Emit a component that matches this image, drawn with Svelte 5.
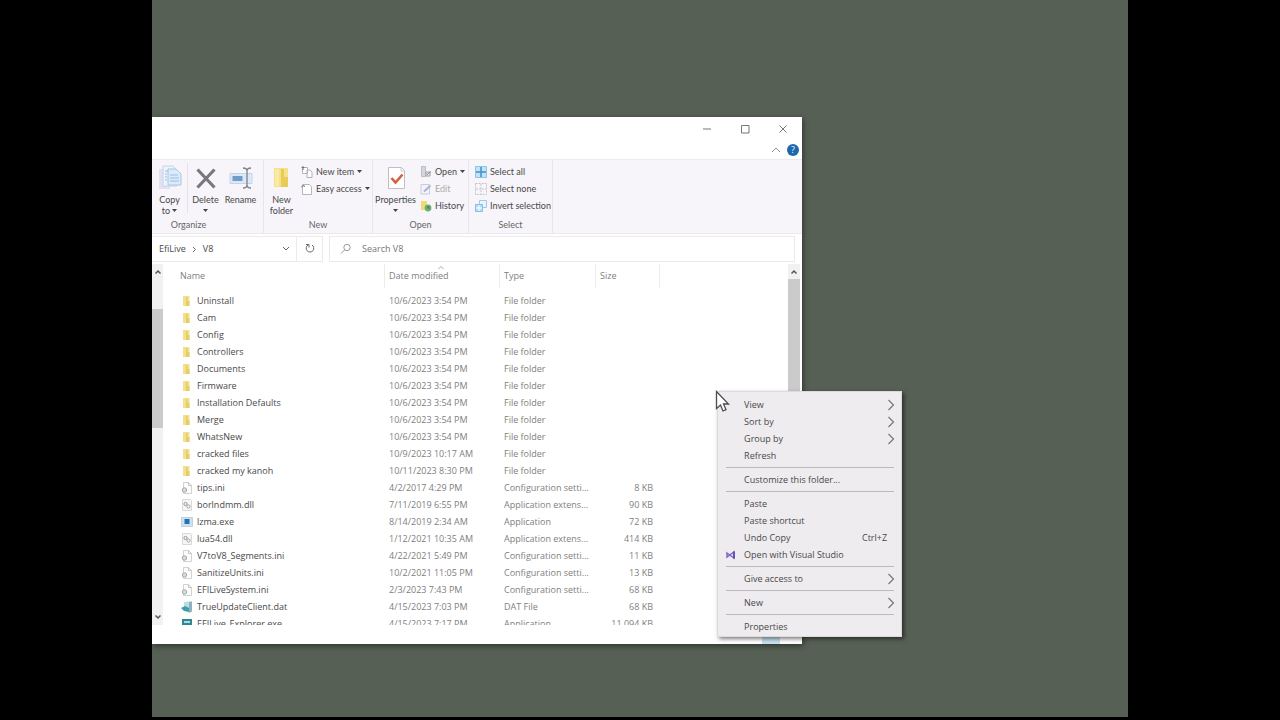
<script lang="ts">
	interface FileEntry {
		name: string;
		date: string;
		type: string;
		size?: string;
		icon: 'folder' | 'ini' | 'dll' | 'exe' | 'dat' | 'app';
	}

	interface MenuItem {
		label: string;
		shortcut?: string;
		submenu?: boolean;
		icon?: boolean;
	}

	const folderDates: [string, string][] = [
		['Uninstall', '10/6/2023 3:54 PM'],
		['Cam', '10/6/2023 3:54 PM'],
		['Config', '10/6/2023 3:54 PM'],
		['Controllers', '10/6/2023 3:54 PM'],
		['Documents', '10/6/2023 3:54 PM'],
		['Firmware', '10/6/2023 3:54 PM'],
		['Installation Defaults', '10/6/2023 3:54 PM'],
		['Merge', '10/6/2023 3:54 PM'],
		['WhatsNew', '10/6/2023 3:54 PM'],
		['cracked files', '10/9/2023 10:17 AM'],
		['cracked my kanoh', '10/11/2023 8:30 PM']
	];

	const files: FileEntry[] = [
		...folderDates.map(([name, date]) => ({ name, date, type: 'File folder', icon: 'folder' as const })),
		{ name: 'tips.ini', date: '4/2/2017 4:29 PM', type: 'Configuration setti...', size: '8 KB', icon: 'ini' },
		{ name: 'borlndmm.dll', date: '7/11/2019 6:55 PM', type: 'Application extens...', size: '90 KB', icon: 'dll' },
		{ name: 'lzma.exe', date: '8/14/2019 2:34 AM', type: 'Application', size: '72 KB', icon: 'exe' },
		{ name: 'lua54.dll', date: '1/12/2021 10:35 AM', type: 'Application extens...', size: '414 KB', icon: 'dll' },
		{ name: 'V7toV8_Segments.ini', date: '4/22/2021 5:49 PM', type: 'Configuration setti...', size: '11 KB', icon: 'ini' },
		{ name: 'SanitizeUnits.ini', date: '10/2/2021 11:05 PM', type: 'Configuration setti...', size: '13 KB', icon: 'ini' },
		{ name: 'EFILiveSystem.ini', date: '2/3/2023 7:43 PM', type: 'Configuration setti...', size: '68 KB', icon: 'ini' },
		{ name: 'TrueUpdateClient.dat', date: '4/15/2023 7:03 PM', type: 'DAT File', size: '68 KB', icon: 'dat' },
		{ name: 'EFILive_Explorer.exe', date: '4/15/2023 7:17 PM', type: 'Application', size: '11,094 KB', icon: 'app' }
	];

	const menu: MenuItem[][] = [
		[
			{ label: 'View', submenu: true },
			{ label: 'Sort by', submenu: true },
			{ label: 'Group by', submenu: true },
			{ label: 'Refresh' }
		],
		[{ label: 'Customize this folder...' }],
		[
			{ label: 'Paste' },
			{ label: 'Paste shortcut' },
			{ label: 'Undo Copy', shortcut: 'Ctrl+Z' },
			{ label: 'Open with Visual Studio', icon: true }
		],
		[{ label: 'Give access to', submenu: true }],
		[{ label: 'New', submenu: true }],
		[{ label: 'Properties' }]
	];

	let search = $state('');
</script>

{#snippet caret()}
	<svg class="caret" width="5" height="3" viewBox="0 0 5 3"><path d="M0 0h5L2.5 3z" fill="#444" /></svg>
{/snippet}

{#snippet fileIcon(kind: string)}
	<svg class="file-icon" width="12" height="12" viewBox="0 0 12 12">
		{#if kind === 'folder'}
			<path d="M2 1h6.500v10H2z" fill="#f3e08c" />
			<path d="M5 2h1.500v4h2v5H5z" fill="#e6cd6c" />
		{:else if kind === 'ini'}
			<path d="M2.500 .5h5l3 3v8h-8z" fill="#fcfcfc" stroke="#c4c6c9" stroke-width=".8" />
			<path d="M7.500 .5v3h3" fill="none" stroke="#b5b8bb" stroke-width=".8" />
			<circle cx="3.500" cy="8" r="2.200" fill="#dadcde" stroke="#a4a7aa" stroke-width="1" />
		{:else if kind === 'dll'}
			<path d="M1.500 .5h8l1 1v10h-9z" fill="#f6f6f6" stroke="#cfd0d2" stroke-width=".8" />
			<circle cx="4.500" cy="5" r="1.600" fill="none" stroke="#909498" />
			<circle cx="7.500" cy="7.500" r="1.600" fill="none" stroke="#a0a4a8" />
		{:else if kind === 'exe'}
			<path d="M.5 1.500h11v9H.5z" fill="#cfe0ee" stroke="#b5c8d8" stroke-width=".8" />
			<path d="M3.500 3h5v5h-5z" fill="#2372b0" />
		{:else if kind === 'dat'}
			<path d="M4 1l7-.5v10L8 12z" fill="#8db3ba" />
			<path d="M3 1h5v9H3z" fill="#b9dde2" />
			<path d="M0 7l4-2 4 2v4L3 10z" fill="#3c9fae" />
		{:else}
			<path d="M1 1h10v10H1z" fill="#2e8796" />
			<path d="M3 3h6v2H3z" fill="#a7dbe0" />
		{/if}
	</svg>
{/snippet}

<div class="screen">
	<main class="window">
		<header class="title-bar">
			<div class="window-buttons">
				<button aria-label="Minimize"><svg width="10" height="10" viewBox="0 0 10 10"><path d="M1 5h8" /></svg></button>
				<button aria-label="Maximize"><svg width="10" height="10" viewBox="0 0 10 10"><path d="M1.500 1.500h7.500v7.500H1.500z" /></svg></button>
				<button aria-label="Close"><svg width="10" height="10" viewBox="0 0 10 10"><path d="M1.500 1.500l7 7M8.500 1.500l-7 7" /></svg></button>
			</div>
			<div class="ribbon-toggles">
				<button aria-label="Collapse ribbon"><svg width="10" height="8" viewBox="0 0 10 8"><path d="M1 6l4-4 4 4" stroke-width=".8" /></svg></button>
				<button class="help" aria-label="Help">?</button>
			</div>
		</header>

		<div class="ribbon">
			<section class="group organize">
				<div class="tools">
					<button class="big">
						<svg width="24" height="26" viewBox="0 0 24 26">
							<path d="M1 4h11v20H1z" fill="#e3e1f0" />
							<path d="M5 1h10l4 4v16H5z" fill="#eef4fc" stroke="#c4d4e8" />
							<path d="M10 4h8l5 5v11H10z" fill="#dceafa" stroke="#a9c6e6" />
							<path d="M12 10h8M12 13h9M12 16h9M7 6h3M7 9h2M7 12h2M7 15h2" stroke="#9abce2" fill="none" />
						</svg>
						<span>Copy<br />to {@render caret()}</span>
					</button>
					<i class="divider"></i>
					<button class="big">
						<svg width="24" height="26" viewBox="0 0 24 26"><path d="M3.500 4.500l17 18M20.500 4.500l-17 18" stroke="#77787d" stroke-width="3.200" fill="none" /></svg>
						<span>Delete<br />{@render caret()}</span>
					</button>
					<button class="big">
						<svg width="24" height="26" viewBox="0 0 24 26">
							<path d="M1 8.500h22v10H1z" fill="#dce8f5" stroke="#c5d5e6" />
							<path d="M3.500 11h10v5h-10z" fill="#6f9cc9" />
							<path d="M14 3q4 0 4 3v14q0 3-4 3M22 3q-4 0-4 3v14q0 3 4 3" fill="none" stroke="#7b8087" stroke-width="1.300" />
						</svg>
						<span>Rename</span>
					</button>
				</div>
				<h2>Organize</h2>
			</section>

			<section class="group new">
				<div class="tools">
					<button class="big">
						<svg width="24" height="26" viewBox="0 0 24 26">
							<path d="M4 3h14v19H4z" fill="#f5e18a" />
							<path d="M11 4h3v8h4v10h-7z" fill="#e9cb58" />
							<path d="M5 4h4v17H5z" fill="#f9eba6" />
						</svg>
						<span>New<br />folder</span>
					</button>
					<div class="stack">
						<button>
							<svg width="12" height="12" viewBox="0 0 12 12"><path d="M1.500 1.500h5v6h-5zM6 4h3l2 2v5.500H6z" fill="#fff" stroke="#b0b3b8" /><path d="M.5 1.500h3M2 0v4" stroke="#777" /></svg>
							New item {@render caret()}
						</button>
						<button>
							<svg width="12" height="12" viewBox="0 0 12 12"><path d="M1.500 1.500h7l2 2v8h-9z" fill="#fff" stroke="#b5b7bb" /><path d="M0 4.500l2-2 2 1" fill="none" stroke="#666" /></svg>
							Easy access {@render caret()}
						</button>
					</div>
				</div>
				<h2>New</h2>
			</section>

			<section class="group open">
				<div class="tools">
					<button class="big">
						<svg width="24" height="26" viewBox="0 0 24 26">
							<path d="M4.500 2.500h13l3 3v18h-16z" fill="#fff" stroke="#bfc0c6" />
							<path d="M17 3v3h3" fill="none" stroke="#c9c9cf" />
							<path d="M7.500 13l4 4.500 7-8" fill="none" stroke="#d4603c" stroke-width="2.600" />
						</svg>
						<span>Properties<br />{@render caret()}</span>
					</button>
					<div class="stack">
						<button>
							<svg width="12" height="12" viewBox="0 0 12 12"><path d="M1.500 .5h4v10h-4z" fill="#d6d7de" stroke="#bbbcc5" /><path d="M6 6h4v4H6z" fill="#eee" stroke="#9c9fa8" /><path d="M7 8.500l4-3" stroke="#888" /></svg>
							Open {@render caret()}
						</button>
						<button class="dim">
							<svg width="12" height="12" viewBox="0 0 12 12"><path d="M1 1.500h8.500v9.500H1z" fill="#f2f3fa" stroke="#c7cbdc" /><path d="M4 8.500l6.500-6" stroke="#aab4cf" stroke-width="2" /></svg>
							Edit
						</button>
						<button>
							<svg width="12" height="12" viewBox="0 0 12 12"><path d="M1 1h6v9H1z" fill="#f2dc72" /><circle cx="8" cy="8" r="3.400" fill="#6eae72" /><path d="M8 6v2h2" fill="none" stroke="#476f5a" /></svg>
							History
						</button>
					</div>
				</div>
				<h2>Open</h2>
			</section>

			<section class="group select">
				<div class="tools">
					<div class="stack">
						<button>
							<svg width="12" height="12" viewBox="0 0 12 12"><path d="M.5.5h11v11H.5z" fill="#c4e2f5" stroke="#8dc5e8" /><path d="M6 1v10M1 6h10" stroke="#3c91cc" stroke-width="1.500" /></svg>
							Select all
						</button>
						<button>
							<svg width="12" height="12" viewBox="0 0 12 12"><path d="M.5.5h11v11H.5zM6 1v10M1 6h10" fill="none" stroke="#c4c6cb" stroke-dasharray="2 1" /></svg>
							Select none
						</button>
						<button>
							<svg width="12" height="12" viewBox="0 0 12 12"><path d="M4.500.5h7v7h-7z" fill="#eaf5fc" stroke="#9bcbea" /><path d="M.5 4.500h7v7h-7z" fill="#b8dcf3" stroke="#83bee4" /><path d="M4 5v6M1 8h6" stroke="#fff" /></svg>
							Invert selection
						</button>
					</div>
				</div>
				<h2>Select</h2>
			</section>
		</div>

		<div class="nav-row">
			<nav class="address" aria-label="Path">
				<a href="#efilive">EfiLive</a>
				<svg width="5" height="7" viewBox="0 0 5 7"><path d="M1 1l2.500 2.500L1 6" /></svg>
				<a href="#v8">V8</a>
				<button class="drop" aria-label="Previous locations"><svg width="8" height="6" viewBox="0 0 8 6"><path d="M1 1l3 3 3-3" /></svg></button>
				<button class="refresh" aria-label="Refresh">
					<svg width="10" height="10" viewBox="0 0 10 10"><path d="M7 2a3.800 3.800 0 1 1-4 0M1 1.500h3v3" /></svg>
				</button>
			</nav>
			<label class="search">
				<svg width="12" height="12" viewBox="0 0 12 12"><circle cx="7" cy="4.500" r="3.200" /><path d="M4.700 6.800L1 10.500" /></svg>
				<input type="text" placeholder="Search V8" aria-label="Search V8" bind:value={search} />
			</label>
		</div>

		<div class="content">
			<div class="scrollbar left">
				<svg width="8" height="6" viewBox="0 0 8 6"><path d="M1.500 4.500L4 2l2.500 2.500" /></svg>
				<div class="thumb"></div>
				<svg width="8" height="6" viewBox="0 0 8 6"><path d="M1.500 1.500L4 4l2.500-2.500" /></svg>
			</div>
			<div class="list">
				<table>
					<colgroup>
						<col class="col-name" />
						<col class="col-date" />
						<col class="col-type" />
						<col class="col-size" />
						<col />
					</colgroup>
					<thead>
						<tr>
							<th><span>Name</span></th>
							<th>
								<svg class="sort" width="8" height="5" viewBox="0 0 8 5"><path d="M1.500 4L4 1.500 6.500 4" /></svg>
								<span>Date modified</span>
							</th>
							<th><span>Type</span></th>
							<th><span>Size</span></th>
							<td><span></span></td>
						</tr>
					</thead>
					<tbody>
						{#each files as file}
							<tr>
								<td class="name"><div>{@render fileIcon(file.icon)}{file.name}</div></td>
								<td>{file.date}</td>
								<td>{file.type}</td>
								<td class="size">{file.size ?? ''}</td>
								<td></td>
							</tr>
						{/each}
					</tbody>
				</table>
			</div>
			<div class="scrollbar right">
				<svg width="8" height="6" viewBox="0 0 8 6"><path d="M1.500 4.500L4 2l2.500 2.500" /></svg>
				<div class="thumb"></div>
			</div>
		</div>

		<footer class="status-bar">
			<button class="view-toggle" aria-label="Details view"></button>
		</footer>
	</main>

	<div class="context-menu" role="menu">
		{#each menu as section}
			<div class="menu-section" role="group">
				{#each section as item}
					<button role="menuitem">
						<span class="menu-icon">
							{#if item.icon}
								<svg width="10" height="10" viewBox="0 0 10 10"><path d="M1 3l7 5V2L1 7z" fill="none" stroke="#8068c8" stroke-width="1.500" /><path d="M7 1l2 1v6L7 9z" fill="#6a50b8" /></svg>
							{/if}
						</span>
						<span>{item.label}</span>
						{#if item.shortcut}
							<span class="shortcut">{item.shortcut}</span>
						{/if}
						{#if item.submenu}
							<svg class="arrow" width="8" height="12" viewBox="0 0 8 12"><path d="M1.500 1l5 5-5 5" /></svg>
						{/if}
					</button>
				{/each}
			</div>
		{/each}
		<svg class="cursor" width="16" height="22" viewBox="0 0 16 22">
			<path d="M1.500 1.500v17l4-3.500 2.500 6 3-1.300-2.500-5.700h5z" fill="#fff" stroke="#4c4c4c" stroke-width="1.300" />
		</svg>
	</div>
</div>

<style>
	:global(body) {
		background: #000;
	}

	.screen {
		position: relative;
		width: 76.25%;
		height: calc(100vh - 3px);
		margin: 0 auto;
		overflow: hidden;
		background: #566054;
		color: #484848;
		font-family: 'Open Sans', 'Noto Sans', sans-serif;
		font-size: 9px;
		line-height: 12px;
	}

	button {
		padding: 0;
		border: 0;
		background: none;
		color: inherit;
		font: inherit;
	}

	.window {
		position: absolute;
		top: 117px;
		left: 0;
		bottom: 73px;
		width: 66.6%;
		display: flex;
		flex-direction: column;
		background: #fff;
		box-shadow: 1px 2px 6px rgba(0, 0, 0, 0.45);
	}

	.title-bar {
		height: 43px;
		flex: none;
		box-sizing: border-box;
		border-bottom: 1px solid #ececf0;
	}

	.title-bar svg {
		fill: none;
		stroke: #777;
	}

	.window-buttons,
	.ribbon-toggles {
		display: flex;
		justify-content: flex-end;
		align-items: center;
	}

	.window-buttons {
		height: 24px;
	}

	.window-buttons button {
		width: 38px;
	}

	.window-buttons svg,
	.ribbon-toggles svg {
		display: block;
		margin: 0 auto;
	}

	.ribbon-toggles {
		height: 18px;
		gap: 6px;
		padding-right: 3px;
	}

	.help {
		width: 12px;
		height: 12px;
		border-radius: 50%;
		background: #1d68ad;
		color: #fff;
	}

	.ribbon {
		display: flex;
		height: 74px;
		flex: none;
		box-sizing: border-box;
		background: #f7f5f9;
		border-bottom: 1px solid #ebe9ee;
		font-family: Lato, 'Open Sans', sans-serif;
	}

	.group {
		display: flex;
		flex-direction: column;
		justify-content: space-between;
		box-sizing: border-box;
		padding: 3px 0 2px;
		border-right: 1px solid #e8e6eb;
	}

	.organize {
		width: 112px;
	}

	.new {
		width: 109px;
	}

	.open {
		width: 96px;
	}

	.select {
		width: 84px;
	}

	.tools {
		display: flex;
		align-items: flex-start;
	}

	.big {
		display: flex;
		flex-direction: column;
		align-items: center;
		width: 35px;
		flex: none;
		line-height: 11px;
	}

	.big > svg {
		margin: 2px 0 3px;
	}

	.open .big {
		width: 45px;
	}

	.divider {
		width: 1px;
		height: 50px;
		background: #e6e4ea;
	}

	.caret {
		vertical-align: 2px;
	}

	.stack {
		display: flex;
		flex-direction: column;
	}

	.stack button {
		display: flex;
		align-items: center;
		gap: 3px;
		height: 17px;
		white-space: nowrap;
	}

	.new .stack,
	.open .stack {
		padding-left: 2px;
	}

	.select .stack {
		padding-left: 6px;
	}

	.dim {
		color: #aaa;
	}

	h2 {
		margin: 0;
		color: #666;
		font-size: 9px;
		font-weight: 400;
		text-align: center;
	}

	.organize h2 {
		padding-right: 38px;
	}

	.nav-row {
		display: flex;
		flex: none;
		gap: 6px;
		height: 26px;
		margin: 2px 7px 2px 0;
	}

	.nav-row svg {
		fill: none;
		stroke: #666;
	}

	.address,
	.search {
		display: flex;
		align-items: center;
		box-sizing: border-box;
		border: 1px solid #ebebeb;
	}

	.address {
		flex: 0 0 171px;
		gap: 6px;
		padding-left: 7px;
		border-left: 0;
	}

	.address a {
		color: inherit;
		text-decoration: none;
	}

	.drop {
		margin-left: auto;
	}

	.refresh {
		align-self: stretch;
		width: 26px;
		border-left: 1px solid #ebebeb;
	}

	.search {
		flex: 1;
		gap: 10px;
		padding-left: 10px;
	}

	.search svg {
		stroke: #999;
	}

	.search input {
		flex: 1;
		min-width: 0;
		padding: 0;
		border: 0;
		outline: 0;
		background: none;
		font: inherit;
	}

	.search input::placeholder {
		color: #777;
	}

	.content {
		display: flex;
		flex: 1;
		min-height: 0;
	}

	.scrollbar {
		display: flex;
		flex-direction: column;
		align-items: center;
		flex: none;
		padding: 5px 0;
		background: #f1f1f1;
	}

	.scrollbar svg {
		flex: none;
		fill: none;
		stroke: #555;
		stroke-width: 1.5;
	}

	.scrollbar .thumb {
		width: 100%;
		background: #cbcbcc;
	}

	.left {
		width: 11px;
	}

	.left .thumb {
		height: 34%;
		margin: 34px 0 auto;
	}

	.right {
		width: 12px;
		margin-right: 2px;
	}

	.right .thumb {
		flex: 1;
		margin-top: 4px;
	}

	.list {
		flex: 1;
		min-width: 0;
		overflow: hidden;
	}

	table {
		width: 100%;
		table-layout: fixed;
		border-collapse: collapse;
		color: #808080;
	}

	.col-name {
		width: 221px;
	}

	.col-date {
		width: 115px;
	}

	.col-type {
		width: 96px;
	}

	.col-size {
		width: 64px;
	}

	th,
	td {
		height: 17px;
		padding: 0 0 0 5px;
		font-weight: 400;
		text-align: left;
		white-space: nowrap;
	}

	thead th,
	thead td {
		position: relative;
		height: 28px;
		padding: 0;
		vertical-align: top;
	}

	thead span {
		display: block;
		height: 24px;
		padding-left: 4px;
		border-left: 1px solid #ececec;
		line-height: 24px;
	}

	th:first-child span {
		padding-left: 17px;
		border-left: 0;
	}

	.sort {
		position: absolute;
		top: 1px;
		left: 46%;
		fill: none;
		stroke: #aaa;
	}

	td.name {
		padding-left: 18px;
		color: #484848;
	}

	.name div {
		display: flex;
		align-items: center;
		gap: 4px;
	}

	td.size {
		padding: 0 6px 0 0;
		text-align: right;
	}

	.status-bar {
		display: flex;
		justify-content: flex-end;
		align-items: flex-end;
		height: 19px;
		flex: none;
		padding-right: 22px;
	}

	.view-toggle {
		width: 18px;
		height: 16px;
		background: #c5e1ef;
	}

	.context-menu {
		position: absolute;
		top: 391px;
		left: 57.9%;
		box-sizing: border-box;
		width: 185px;
		padding: 4px 0 1px;
		background: #eeecef;
		border: 1px solid #dcdadd;
		box-shadow: 2px 2px 4px rgba(0, 0, 0, 0.5);
	}

	.menu-section + .menu-section {
		padding-top: 3px;
	}

	.menu-section + .menu-section::before {
		content: '';
		display: block;
		height: 1px;
		margin: 0 7px 3px 8px;
		background: #bcbabd;
	}

	.menu-section button {
		display: flex;
		align-items: center;
		width: 100%;
		height: 17px;
		padding: 0 6px 0 8px;
		text-align: left;
	}

	.menu-icon {
		display: flex;
		width: 18px;
		flex: none;
	}

	.shortcut {
		margin-left: auto;
		padding-right: 8px;
	}

	.arrow {
		margin-left: auto;
		fill: none;
		stroke: #777;
		stroke-width: 1.2;
	}

	.cursor {
		position: absolute;
		top: -2px;
		left: -3px;
	}
</style>
